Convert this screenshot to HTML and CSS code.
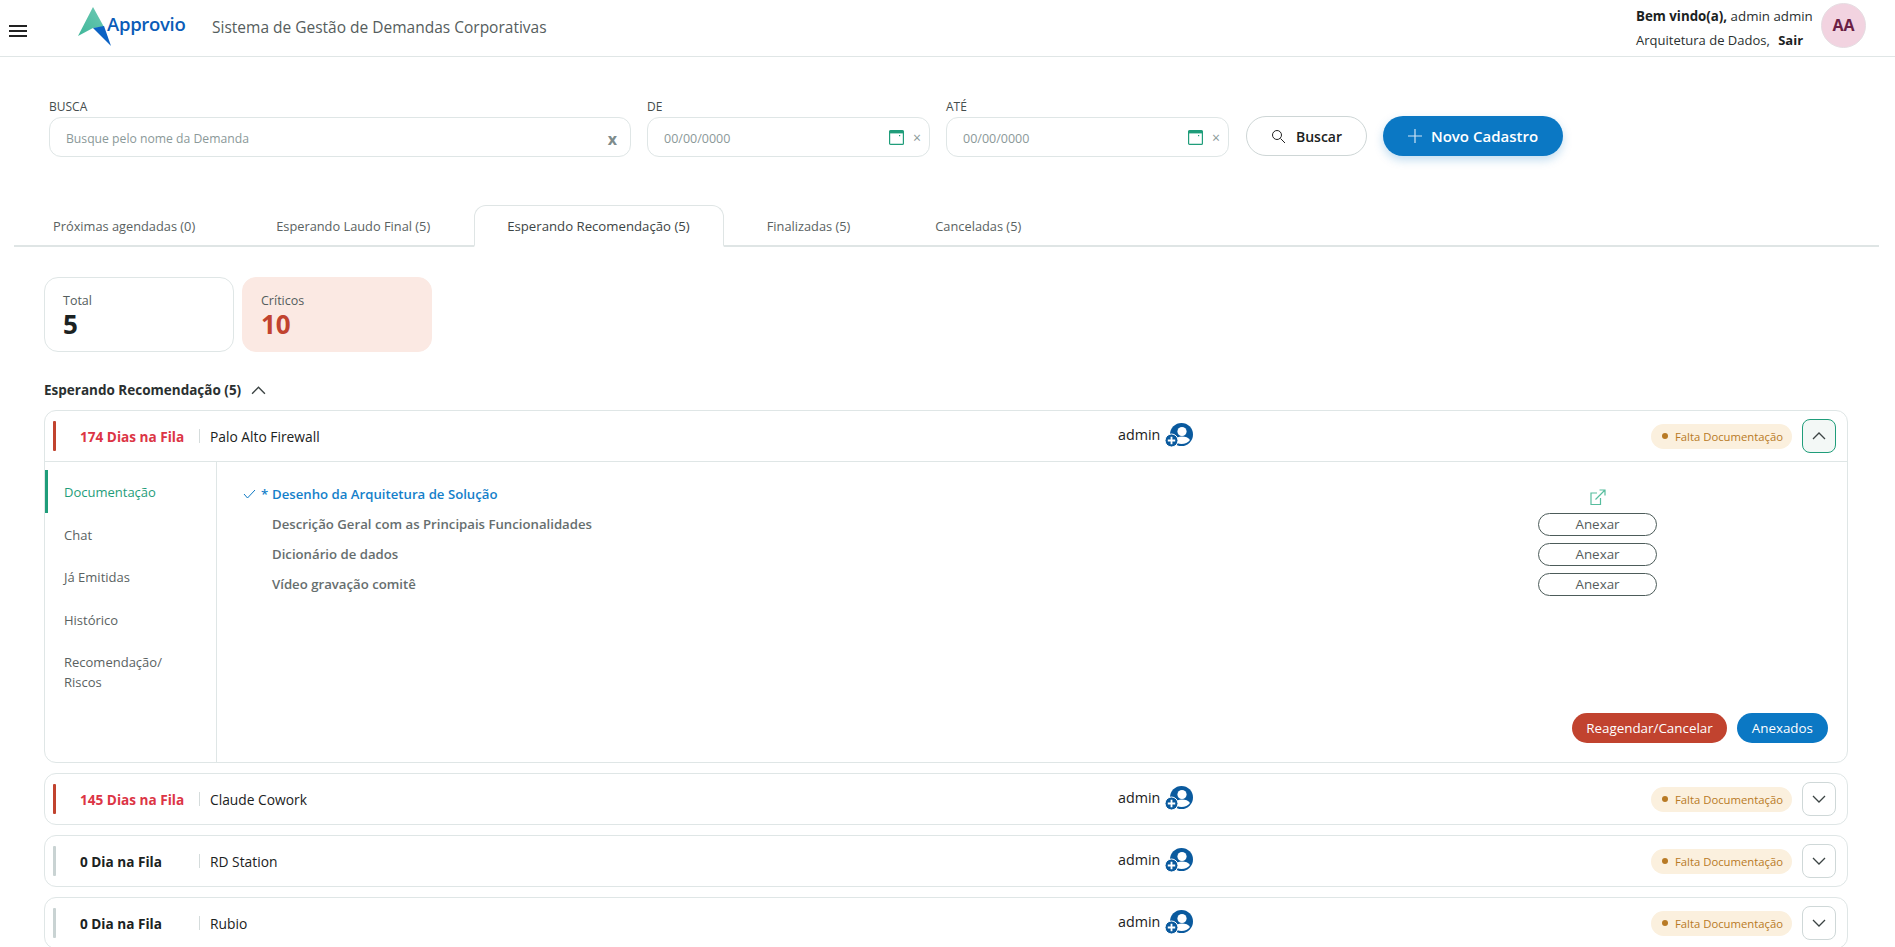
FILE: index.html
```html
<html>
<head>
    <meta charset="utf-8">
    <title>Approvio</title>
    <link rel="stylesheet" href="styles.css">
</head>
<body>
    <svg class="icon-defs" width="0" height="0">
        <symbol id="user-add" viewBox="0 0 28 24">
            <circle cx="16.5" cy="11.5" r="11.5" fill="#0a5a9e"/>
            <circle cx="17" cy="8.5" r="4.6" fill="#fff"/>
            <path d="M8.5 17.5c2-3 5-4 8.500-4s6.500 1 8 3.500c-2 2.500-5 4-8.500 4-3 0-6-1.300-8-3.500z" fill="#fff"/>
            <circle cx="6.500" cy="17.500" r="6.500" fill="#0a5a9e" stroke="#fff" stroke-width="1"/>
            <path d="M6.500 13.800v7.400M2.800 17.500h7.400" stroke="#fff" stroke-width="1.800"/>
        </symbol>
        <symbol id="calendar" viewBox="0 0 15 15">
            <rect x="0.600" y="0.600" width="13.800" height="13.800" rx="1" fill="none" stroke="#1f9d7a" stroke-width="1.200"/>
            <rect x="0.600" y="0.600" width="13.800" height="2.800" fill="#1f9d7a"/>
            <rect x="10" y="5" width="1.200" height="1.200" fill="#1f9d7a"/>
        </symbol>
        <symbol id="chev-down" viewBox="0 0 14 8">
            <path d="M1 1l6 6 6-6" fill="none" stroke="#3c4444" stroke-width="1.300"/>
        </symbol>
        <symbol id="chev-up" viewBox="0 0 14 8">
            <path d="M1 7l6-6 6 6" fill="none" stroke="#3c4444" stroke-width="1.300"/>
        </symbol>
    </svg>

    <header class="topbar">
        <div class="hamburger"><span></span><span></span><span></span></div>
        <div class="logo">
            <svg class="logo-mark" width="34" height="40" viewBox="0 0 34 40">
                <defs>
                    <linearGradient id="teal" x1="0" y1="1" x2="1" y2="0">
                        <stop offset="0" stop-color="#3fb79a"/>
                        <stop offset="1" stop-color="#6fc9b4"/>
                    </linearGradient>
                </defs>
                <path d="M15 0L0 29l15-8 11-1z" fill="url(#teal)"/>
                <path d="M15 21l11-2 7 20z" fill="#0b62c4"/>
            </svg>
            <span class="logo-text">Approvio</span>
        </div>
        <div class="app-title">Sistema de Gestão de Demandas Corporativas</div>
        <div class="user-info">
            <div class="user-text">
                <div class="welcome"><b>Bem vindo(a),</b> admin admin</div>
                <div>Arquitetura de Dados, <b class="logout">Sair</b></div>
            </div>
            <div class="avatar">AA</div>
        </div>
    </header>

    <section class="filters">
        <div class="field field-search">
            <label>BUSCA</label>
            <div class="input-box">
                <span class="placeholder">Busque pelo nome da Demanda</span>
                <span class="clear-x">x</span>
            </div>
        </div>
        <div class="field field-date">
            <label>DE</label>
            <div class="input-box">
                <span class="placeholder">00/00/0000</span>
                <svg class="cal" width="15" height="15"><use href="#calendar"/></svg>
                <span class="clear-small">×</span>
            </div>
        </div>
        <div class="field field-date">
            <label>ATÉ</label>
            <div class="input-box">
                <span class="placeholder">00/00/0000</span>
                <svg class="cal" width="15" height="15"><use href="#calendar"/></svg>
                <span class="clear-small">×</span>
            </div>
        </div>
        <button class="btn-search">
            <svg width="15" height="15" viewBox="0 0 15 15"><circle cx="6" cy="6" r="4.500" fill="none" stroke="#222" stroke-width="1"/><path d="M9.500 9.500l4.500 4.500" stroke="#222" stroke-width="1"/></svg>
            Buscar
        </button>
        <button class="btn-new">
            <svg width="14" height="14" viewBox="0 0 14 14"><path d="M7 0v14M0 7h14" stroke="#cfe4f5" stroke-width="1.200"/></svg>
            Novo Cadastro
        </button>
    </section>

    <nav class="tabs">
        <a class="tab">Próximas agendadas (0)</a>
        <a class="tab">Esperando Laudo Final (5)</a>
        <a class="tab active">Esperando Recomendação (5)</a>
        <a class="tab">Finalizadas (5)</a>
        <a class="tab">Canceladas (5)</a>
    </nav>

    <section class="summary">
        <div class="stat">
            <div class="stat-label">Total</div>
            <div class="stat-value">5</div>
        </div>
        <div class="stat critical">
            <div class="stat-label">Críticos</div>
            <div class="stat-value">10</div>
        </div>
    </section>

    <div class="group-title">
        Esperando Recomendação (5)
        <svg width="15" height="9"><use href="#chev-up"/></svg>
    </div>

    <section class="list">
        <article class="item open">
            <div class="item-head">
                <span class="bar red"></span>
                <span class="days late">174 Dias na Fila</span>
                <span class="name">Palo Alto Firewall</span>
                <span class="owner">admin <svg width="28" height="24"><use href="#user-add"/></svg></span>
                <span class="badge"><i></i>Falta Documentação</span>
                <button class="toggle active"><svg width="14" height="8"><use href="#chev-up"/></svg></button>
            </div>
            <div class="item-body">
                <ul class="side-nav">
                    <li class="active">Documentação</li>
                    <li>Chat</li>
                    <li>Já Emitidas</li>
                    <li>Histórico</li>
                    <li>Recomendação/<br>Riscos</li>
                </ul>
                <div class="docs">
                    <div class="doc-row done">
                        <span class="doc-check">
                            <svg width="13" height="10" viewBox="0 0 13 10"><path d="M1 5l3.500 4L12 1" fill="none" stroke="#0b78c4" stroke-width="1"/></svg>
                            <span>*</span>
                        </span>
                        <span class="doc-name">Desenho da Arquitetura de Solução</span>
                        <span class="doc-action doc-link">
                            <svg width="16" height="16" viewBox="0 0 16 16"><path d="M7 4H1v11.500h9.500V9" fill="none" stroke="#57bd9e" stroke-width="1.200"/><path d="M5.500 10.500L15 1M9.500 1H15v5.500" fill="none" stroke="#57bd9e" stroke-width="1.200"/></svg>
                        </span>
                    </div>
                    <div class="doc-row">
                        <span class="doc-check"></span>
                        <span class="doc-name">Descrição Geral com as Principais Funcionalidades</span>
                        <span class="doc-action"><button class="btn-attach">Anexar</button></span>
                    </div>
                    <div class="doc-row">
                        <span class="doc-check"></span>
                        <span class="doc-name">Dicionário de dados</span>
                        <span class="doc-action"><button class="btn-attach">Anexar</button></span>
                    </div>
                    <div class="doc-row">
                        <span class="doc-check"></span>
                        <span class="doc-name">Vídeo gravação comitê</span>
                        <span class="doc-action"><button class="btn-attach">Anexar</button></span>
                    </div>
                    <div class="doc-footer">
                        <button class="btn-pill btn-red">Reagendar/Cancelar</button>
                        <button class="btn-pill btn-blue">Anexados</button>
                    </div>
                </div>
            </div>
        </article>

        <article class="item">
            <div class="item-head">
                <span class="bar red"></span>
                <span class="days late">145 Dias na Fila</span>
                <span class="name">Claude Cowork</span>
                <span class="owner">admin <svg width="28" height="24"><use href="#user-add"/></svg></span>
                <span class="badge"><i></i>Falta Documentação</span>
                <button class="toggle"><svg width="14" height="8"><use href="#chev-down"/></svg></button>
            </div>
        </article>

        <article class="item">
            <div class="item-head">
                <span class="bar"></span>
                <span class="days">0 Dia na Fila</span>
                <span class="name">RD Station</span>
                <span class="owner">admin <svg width="28" height="24"><use href="#user-add"/></svg></span>
                <span class="badge"><i></i>Falta Documentação</span>
                <button class="toggle"><svg width="14" height="8"><use href="#chev-down"/></svg></button>
            </div>
        </article>

        <article class="item">
            <div class="item-head">
                <span class="bar"></span>
                <span class="days">0 Dia na Fila</span>
                <span class="name">Rubio</span>
                <span class="owner">admin <svg width="28" height="24"><use href="#user-add"/></svg></span>
                <span class="badge"><i></i>Falta Documentação</span>
                <button class="toggle"><svg width="14" height="8"><use href="#chev-down"/></svg></button>
            </div>
        </article>
    </section>
</body>
</html>
```

FILE: styles.css
```css
* {
    box-sizing: border-box;
}

html, body {
    height: 947px;
    overflow: hidden;
}

body {
    margin: 0;
    font-family: "Open Sans", "Noto Sans", sans-serif;
    font-size: 13px;
    color: #1b2222;
    background-color: #fff;
}

button {
    font-family: inherit;
    cursor: pointer;
}

.icon-defs {
    display: block;
    height: 0;
}

/* top bar */
.topbar {
    display: flex;
    align-items: center;
    height: 57px;
    padding-left: 9px;
    border-bottom: 1px solid #e0e6e6;
}

.hamburger {
    display: flex;
    flex-direction: column;
    justify-content: space-between;
    width: 18px;
    height: 12px;
    margin-top: 5px;
}

.hamburger span {
    display: block;
    height: 2px;
    background-color: #222;
}

.logo {
    position: relative;
    width: 109px;
    height: 56px;
    margin-left: 51px;
}

.logo-mark {
    position: absolute;
    left: 0;
    top: 7px;
}

.logo-text {
    position: absolute;
    left: 29px;
    top: 11px;
    font-size: 18.500px;
    font-weight: 600;
    letter-spacing: -0.3px;
    color: #0b5cb8;
}

.app-title {
    margin: -2px 0 0 25px;
    font-size: 15.500px;
    font-weight: 500;
    color: #555d5d;
}

.user-info {
    display: flex;
    align-items: center;
    margin-left: auto;
    padding-right: 29px;
}

.user-text {
    width: 185px;
    line-height: 24px;
    color: #2a3030;
}

.welcome {
    font-size: 13.300px;
}

.user-text b {
    font-weight: 700;
    color: #1b2222;
}

.logout {
    margin-left: 5px;
}

.avatar {
    display: flex;
    align-items: center;
    justify-content: center;
    width: 45px;
    height: 45px;
    margin-bottom: 6px;
    border-radius: 50%;
    border: 1px solid #e6dde2;
    background-color: #f2d3e0;
    color: #6b1f45;
    font-size: 16px;
    font-weight: 700;
}

/* filters */
.filters {
    display: flex;
    align-items: flex-end;
    padding: 42px 0 0 49px;
}

.field label {
    display: block;
    height: 18px;
    font-size: 12px;
    line-height: 15px;
    color: #454d4d;
}

.field-search {
    width: 582px;
}

.field-date {
    width: 283px;
    margin-left: 16px;
}

.input-box {
    display: flex;
    align-items: center;
    height: 40px;
    padding: 0 8px 0 16px;
    border: 1px solid #dfe6e6;
    border-radius: 12px;
    background-color: #fff;
}

.placeholder {
    flex: 1;
    margin-top: 2px;
    font-size: 12.500px;
    color: #8b9999;
}

.field-search .placeholder {
    font-size: 12.200px;
}

.clear-x {
    margin-top: 3px;
    margin-right: 5px;
    font-size: 16px;
    font-weight: 700;
    color: #7e8c8c;
}

.cal {
    margin-right: 9px;
}

.clear-small {
    font-size: 14px;
    color: #8b9999;
}

.btn-search {
    display: flex;
    align-items: center;
    justify-content: center;
    gap: 10px;
    width: 121px;
    height: 40px;
    margin: 0 0 1px 17px;
    border: 1px solid #ced6d6;
    border-radius: 20px;
    background-color: #fff;
    color: #1b2222;
    font-size: 14px;
    font-weight: 600;
}

.btn-new {
    display: flex;
    align-items: center;
    justify-content: center;
    gap: 9px;
    width: 180px;
    height: 40px;
    margin: 0 0 1px 16px;
    border: none;
    border-radius: 20px;
    background-color: #0b78c4;
    color: #fff;
    font-size: 15px;
    font-weight: 600;
    box-shadow: 0 4px 10px rgba(11, 120, 196, 0.25);
}

/* tabs */
.tabs {
    display: flex;
    align-items: flex-end;
    height: 42px;
    margin: 48px 16px 0 14px;
    border-bottom: 2px solid #dfe5e5;
}

.tab {
    display: flex;
    align-items: center;
    height: 41px;
    padding: 0 40px;
    font-size: 12.800px;
    color: #5a6262;
    margin-bottom: -1px;
}

.tab:first-child {
    padding: 0 41px 0 39px;
}

.tab:last-child {
    margin-left: 5px;
}

.tab.active {
    margin: 0 3px -2px 4px;
    padding: 0 33px 0 32px;
    height: 42px;
    border: 1px solid #dfe5e5;
    border-bottom: 2px solid #fff;
    border-radius: 12px 12px 0 0;
    background-color: #fff;
    color: #3d4545;
    font-size: 13.200px;
    font-weight: 500;
}

/* summary */
.summary {
    display: flex;
    gap: 8px;
    padding: 30px 0 0 44px;
}

.stat {
    width: 190px;
    height: 75px;
    padding: 15px 18px;
    border: 1px solid #dfe6e6;
    border-radius: 14px;
}

.stat.critical {
    border-color: #fbe9e3;
    background-color: #fbe9e3;
}

.stat-label {
    font-size: 12.500px;
    line-height: 16px;
    color: #555d5d;
}

.stat-value {
    font-size: 26px;
    line-height: 30px;
    font-weight: 700;
    color: #1b2222;
}

.critical .stat-value {
    color: #c1432f;
}

.group-title {
    display: flex;
    align-items: center;
    gap: 10px;
    height: 20px;
    margin: 28px 0 10px 44px;
    font-size: 13.500px;
    font-weight: 700;
    color: #2a3030;
}

/* list of demands */
.list {
    display: flex;
    flex-direction: column;
    gap: 10px;
    margin: 0 47px 0 44px;
}

.item {
    border: 1px solid #dfe6e6;
    border-radius: 12px;
    background-color: #fff;
}

.item-head {
    display: flex;
    align-items: center;
    height: 50px;
    padding: 0 11px 0 8px;
}

.bar {
    flex: none;
    width: 3px;
    height: 30px;
    border-radius: 1px;
    background-color: #c9d3d3;
}

.bar.red {
    background-color: #c1432f;
}

.days {
    flex: none;
    width: 119px;
    margin-left: 24px;
    padding-right: 0;
    font-size: 13.600px;
    font-weight: 700;
    color: #1b2222;
}

.days.late {
    color: #dc3545;
}

.name {
    flex: none;
    width: 919px;
    height: 14px;
    padding-left: 10px;
    border-left: 1px solid #d5dcdc;
    font-size: 13.800px;
    font-weight: 500;
    line-height: 16px;
    color: #1b2222;
}

.owner {
    display: flex;
    align-items: center;
    gap: 5px;
    width: 533px;
    font-size: 14.300px;
    color: #1b2222;
    margin-top: -3px;
}

.badge {
    display: flex;
    align-items: center;
    flex: none;
    width: 141px;
    height: 25px;
    padding-left: 11px;
    border-radius: 13px;
    background-color: #fbf0de;
    color: #b87a25;
    font-size: 11.300px;
    white-space: nowrap;
}

.badge i {
    width: 6px;
    height: 6px;
    margin-right: 7px;
    border-radius: 50%;
    background-color: #b87a25;
}

.toggle {
    display: flex;
    align-items: center;
    justify-content: center;
    flex: none;
    width: 34px;
    height: 34px;
    margin-left: 10px;
    padding: 0;
    border: 1px solid #cfd8d8;
    border-radius: 8px;
    background-color: #fff;
}

.toggle.active {
    border-color: #1f9d7a;
    background-color: #f3f8f6;
}

.item-body {
    display: flex;
    height: 301px;
    border-top: 1px solid #dfe6e6;
}

.side-nav {
    flex: none;
    width: 172px;
    margin: 0;
    padding: 8px 0 0;
    list-style: none;
    border-right: 1px solid #dfe6e6;
}

.side-nav li {
    padding: 12px 16px 10.500px 16px;
    border-left: 3px solid transparent;
    line-height: 20px;
    color: #5a6262;
    font-size: 13px;
    font-weight: 500;
}

.side-nav li.active {
    border-left-color: #1f9d7a;
    color: #1f9d7a;
}

.docs {
    flex: 1;
    position: relative;
    padding: 17px 0 0 26px;
}

.doc-row {
    display: flex;
    align-items: center;
    height: 30px;
    font-size: 13.200px;
    font-weight: 600;
    color: #666e6e;
}

.doc-row.done {
    color: #1480ca;
}

.doc-check {
    display: flex;
    align-items: center;
    gap: 5px;
    width: 29px;
}

.doc-name {
    flex: 1;
}

.doc-action {
    display: flex;
    justify-content: center;
    width: 119px;
    margin-right: 190px;
}

.doc-link {
    margin-top: 6px;
}

.btn-attach {
    width: 119px;
    height: 23px;
    padding: 0;
    border: 1px solid #4d5c5a;
    border-radius: 12px;
    background-color: #fff;
    color: #555d5d;
    font-size: 13.400px;
}

.doc-footer {
    position: absolute;
    right: 19px;
    bottom: 19px;
    display: flex;
    gap: 10px;
}

.btn-pill {
    height: 30px;
    padding: 0 14px;
    border: none;
    border-radius: 15px;
    color: #fff;
    font-size: 13.400px;
}

.btn-red {
    background-color: #c1432f;
}

.btn-blue {
    padding: 0 15px;
    background-color: #0b78c4;
}
```
